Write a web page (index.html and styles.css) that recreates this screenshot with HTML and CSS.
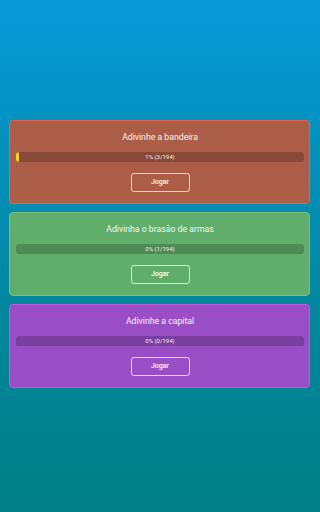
FILE: index.html
```html
<!DOCTYPE html>
<html lang="pt">

<head>
    <meta charset="UTF-8">
    <meta name="viewport" content="width=device-width, initial-scale=1.0">
    <title>Jogos</title>
    <link rel="stylesheet" href="styles.css">
</head>

<body>
    <div class="container">
        <div class="card card-flag">
            <div class="title">Adivinhe a bandeira</div>
            <div class="bar">
                <div class="fill" style="width: 1%"></div>
                <span class="bar-text">1% (3/194)</span>
            </div>
            <a class="play" href="#">Jogar</a>
        </div>

        <div class="card card-arms">
            <div class="title">Adivinha o brasão de armas</div>
            <div class="bar">
                <div class="fill" style="width: 0%"></div>
                <span class="bar-text">0% (1/194)</span>
            </div>
            <a class="play" href="#">Jogar</a>
        </div>

        <div class="card card-capital">
            <div class="title">Adivinhe a capital</div>
            <div class="bar">
                <div class="fill" style="width: 0%"></div>
                <span class="bar-text">0% (0/194)</span>
            </div>
            <a class="play" href="#">Jogar</a>
        </div>
    </div>
</body>

</html>
```

FILE: styles.css
```css
html,
body {
    height: 100%;
}

body {
    font-family: Roboto, 'Noto Sans', sans-serif;
    background: linear-gradient(to bottom, #079ad9 0%, #03879f 60%, #008085 100%);
    margin: 0;
    padding: 0;
    color: #fff;
}

.container {
    padding: 120px 10px 0 9px;
    display: flex;
    flex-direction: column;
    gap: 8px;
}

.card {
    height: 84px;
    box-sizing: border-box;
    border: 1px solid;
    border-radius: 4px;
    padding: 10px 5px 0 6px;
    display: flex;
    flex-direction: column;
    align-items: center;
}

.card-flag {
    background-color: #ab5d47;
    border-color: #e0664c;
}

.card-arms {
    background-color: #61ad6b;
    border-color: #78c07c;
}

.card-capital {
    background-color: #994ec6;
    border-color: #c05bd6;
}

.title {
    font-size: 8.7px;
    line-height: 12px;
    height: 12px;
    color: #f8f4f4;
}

.bar {
    position: relative;
    align-self: stretch;
    height: 10px;
    margin-top: 9px;
    border-radius: 3px;
    background-color: rgba(0, 0, 0, 0.2);
    overflow: hidden;
}

.fill {
    height: 100%;
    min-width: 3px;
    background-color: #f7d51d;
    border-radius: 3px;
}

.card-arms .fill,
.card-capital .fill {
    min-width: 0;
}

.bar-text {
    position: absolute;
    left: 0;
    right: 0;
    top: 0;
    text-align: center;
    font-size: 6px;
    line-height: 10px;
    color: #f4eeee;
}

.play {
    margin-top: 11px;
    width: 59px;
    height: 19px;
    box-sizing: border-box;
    border: 1px solid rgba(255, 255, 255, 0.75);
    border-radius: 3px;
    color: #fff;
    font-size: 7px;
    font-weight: 500;
    line-height: 17px;
    text-align: center;
    text-decoration: none;
}
```
